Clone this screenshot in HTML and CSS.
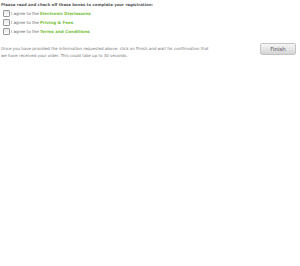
FILE: index.html
```html
<!DOCTYPE html>
<html lang="en">
<head>
    <meta charset="UTF-8">
    <title>Complete Registration</title>
    <link rel="stylesheet" href="styles.css">
</head>
<body>
    <div class="container">
        <h1>Please read and check off these boxes to complete your registration:</h1>
        <ul class="agree-list">
            <li><label><input type="checkbox">I agree to the <a href="#">Electronic Disclosures</a></label></li>
            <li><label><input type="checkbox">I agree to the <a href="#">Pricing &amp; Fees</a></label></li>
            <li><label><input type="checkbox">I agree to the <a href="#">Terms and Conditions</a></label></li>
        </ul>
        <div class="finish-row">
            <p>Once you have provided the information requested above, click on Finish and wait for confirmation that we have received your order. This could take up to 30 seconds.</p>
            <button type="button">Finish</button>
        </div>
    </div>
</body>
</html>
```

FILE: styles.css
```css
body {
    font-family: "DejaVu Sans", Verdana, sans-serif;
    background-color: #ffffff;
    margin: 0;
    padding: 0;
    color: #666;
}
.container {
    padding: 0.5px 1px;
}
h1 {
    font-size: 3.9px;
    font-weight: bold;
    color: #555;
    margin: 0 0 1px 0;
    line-height: 7px;
}
.agree-list {
    list-style: none;
    margin: 0;
    padding: 0 0 0 2px;
}
.agree-list li {
    height: 9px;
    display: flex;
    align-items: center;
    font-size: 4.1px;
}
.agree-list label {
    display: block;
    line-height: 7px;
    color: #666;
}
.agree-list input {
    appearance: none;
    float: left;
    width: 7px;
    height: 7px;
    margin: 0 1px 0 0;
    border: 1px solid #9a9a9a;
    border-radius: 1px;
    background: linear-gradient(#e8e8e8, #ffffff);
    box-sizing: border-box;
}
.agree-list a {
    color: #77c23a;
    font-weight: bold;
    text-decoration: none;
}
.finish-row {
    display: flex;
    justify-content: space-between;
    align-items: flex-start;
    margin-top: 7.5px;
}
.finish-row p {
    font-size: 4px;
    line-height: 7px;
    margin: 1.5px 0 0 0;
    width: 214px;
    color: #777;
}
.finish-row button {
    width: 36px;
    height: 12px;
    margin-right: 3px;
    font-family: "DejaVu Sans", Verdana, sans-serif;
    font-size: 5.5px;
    color: #555;
    border: 1px solid #c4c4c4;
    border-radius: 2px;
    background: linear-gradient(#f6f6f6, #d4d4d4);
    padding: 0;
}
```
